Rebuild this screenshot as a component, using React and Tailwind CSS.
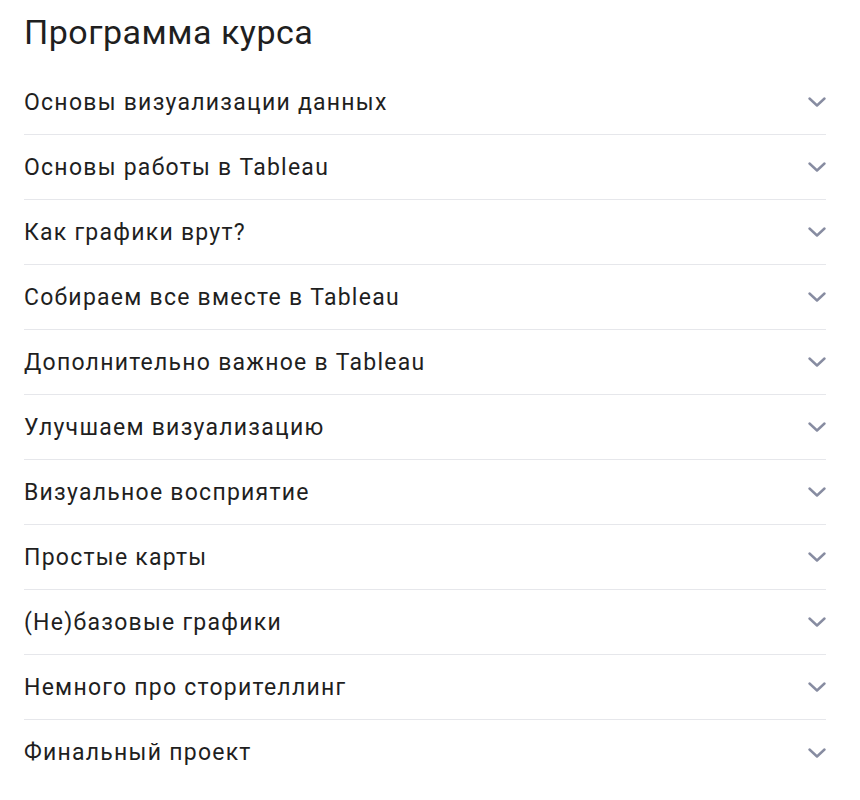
import React from "react";

const items = [
  "Основы визуализации данных",
  "Основы работы в Tableau",
  "Как графики врут?",
  "Собираем все вместе в Tableau",
  "Дополнительно важное в Tableau",
  "Улучшаем визуализацию",
  "Визуальное восприятие",
  "Простые карты",
  "(Не)базовые графики",
  "Немного про сторителлинг",
  "Финальный проект",
];

function Chevron() {
  return (
    <svg width="18" height="10" viewBox="0 0 18 10" fill="none">
      <path d="M1.5 1.5 L9 8.5 L16.5 1.5" stroke="#878ca1" strokeWidth="2.4" strokeLinecap="round" strokeLinejoin="round" />
    </svg>
  );
}

export default function App() {
  return (
    <div className="bg-white min-h-[800px] px-6 pt-[10px] text-[#1f1f1f]" style={{ fontFamily: "Roboto, 'Noto Sans', sans-serif" }}>
      <h1 className="text-[34px] leading-[44px] font-normal mb-[16px] tracking-[0.5px]">Программа курса</h1>
      <div className="w-[802px]">
        {items.map((t, i) => (
          <div
            key={i}
            className={`flex items-center justify-between h-[65px] ${i < items.length - 1 ? "border-b border-[#e6e7eb]" : ""}`}
          >
            <span className="text-[23px] leading-none tracking-[1.25px]">{t}</span>
            <Chevron />
          </div>
        ))}
      </div>
    </div>
  );
}
